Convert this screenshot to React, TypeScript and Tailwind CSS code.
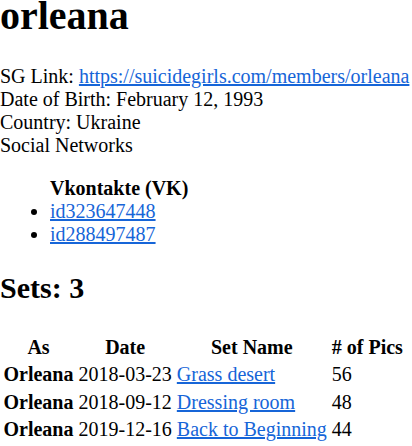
export default function App() {
  const sets = [
    { as: 'Orleana', date: '2018-03-23', name: 'Grass desert', pics: 56 },
    { as: 'Orleana', date: '2018-09-12', name: 'Dressing room', pics: 48 },
    { as: 'Orleana', date: '2019-12-16', name: 'Back to Beginning', pics: 44 },
  ]
  const link = 'text-[#1665d8] underline'

  return (
    <div className="bg-white text-black text-[20px] leading-[23px] font-['Liberation_Serif','Times_New_Roman',serif] h-[446px] overflow-hidden">
      <h1 className="text-[40px] leading-[30px] font-bold pt-[1px] mb-[34px]">orleana</h1>

      <div>
        SG Link: <a href="#" className={link}>https://suicidegirls.com/members/orleana</a>
      </div>
      <div>Date of Birth: February 12, 1993</div>
      <div>Country: Ukraine</div>
      <div>Social Networks</div>

      <ul className="list-disc pl-[50px] mt-[20px] mb-[20px]">
        <span className="font-bold block">Vkontakte (VK)</span>
        <li>
          <a href="#" className={link}>id323647448</a>
        </li>
        <li>
          <a href="#" className={link}>id288497487</a>
        </li>
      </ul>

      <h2 className="text-[30px] leading-[34.5px] font-bold mt-[25px] mb-[27px]">Sets: 3</h2>

      <table className="border-separate border-spacing-x-[2.5px] border-spacing-y-[2px]">
        <thead>
          <tr>
            <th className="px-[1.5px] py-[1.25px] font-bold text-center">As</th>
            <th className="px-[1.5px] py-[1.25px] font-bold text-center">Date</th>
            <th className="px-[1.5px] py-[1.25px] font-bold text-center">Set Name</th>
            <th className="px-[1.5px] py-[1.25px] font-bold text-center"># of Pics</th>
          </tr>
        </thead>
        <tbody>
          {sets.map((s) => (
            <tr key={s.date}>
              <td className="px-[1.5px] py-[1.25px] font-bold">{s.as}</td>
              <td className="px-[1.5px] py-[1.25px]">{s.date}</td>
              <td className="px-[1.5px] py-[1.25px]">
                <a href="#" className={link}>{s.name}</a>
              </td>
              <td className="px-[1.5px] py-[1.25px]">{s.pics}</td>
            </tr>
          ))}
        </tbody>
      </table>
    </div>
  )
}
